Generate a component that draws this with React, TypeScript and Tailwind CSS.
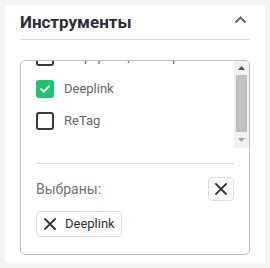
import { useState } from "react";

const items = [
  { id: "info", label: "Информация о версии", checked: false },
  { id: "deeplink", label: "Deeplink", checked: true },
  { id: "retag", label: "ReTag", checked: false },
];

function Check({ checked }: { checked: boolean }) {
  if (checked) {
    return (
      <span className="flex h-[18px] w-[18px] shrink-0 items-center justify-center rounded-[3px] bg-[#1cc46d]">
        <svg width="12" height="12" viewBox="0 0 12 12" fill="none">
          <path d="M2.2 6.2 4.8 8.7 9.8 3.4" stroke="#fff" strokeWidth="2" strokeLinecap="round" strokeLinejoin="round" />
        </svg>
      </span>
    );
  }
  return <span className="h-[18px] w-[18px] shrink-0 rounded-[3px] border-2 border-[#363645]" />;
}

function Cross({ size = 12 }: { size?: number }) {
  return (
    <svg width={size} height={size} viewBox="0 0 12 12" fill="none">
      <path d="M1 1 11 11M11 1 1 11" stroke="#2f2f2f" strokeWidth="1.8" strokeLinecap="square" />
    </svg>
  );
}

export default function App() {
  const [list] = useState(items);

  return (
    <div className="min-h-[268px] bg-[#f3f3f3] p-[5px] font-['Roboto',sans-serif]">
      <div className="h-[258px] bg-white px-[15px]">
        <div className="flex h-[35px] items-end justify-between border-b border-[#dcdcdc] pb-[7px]">
          <h2 className="text-[17px] leading-5 font-bold text-[#2e2e36]">Инструменты</h2>
          <svg width="13" height="8" viewBox="0 0 13 8" fill="none" className="mb-[8px] mr-[3px]">
            <path d="M1.5 6.5 6.5 1.5 11.5 6.5" stroke="#6a6a6a" strokeWidth="2" />
          </svg>
        </div>

        <div className="mt-[20px] h-[195px] overflow-hidden rounded-[5px] border border-[#bdbdbd]">
          <div className="flex h-[87px]">
            <div className="flex-1 overflow-hidden pl-[15px]">
              <div className="-mt-[20px]">
                {list.map((it) => (
                  <div key={it.id} className="flex h-8 items-center gap-[10px]">
                    <Check checked={it.checked} />
                    <span className="whitespace-nowrap text-[13px] text-[#666666]">{it.label}</span>
                  </div>
                ))}
              </div>
            </div>
            <div className="flex w-[15px] flex-col items-center bg-[#f1f1f1]">
              <div className="flex h-[14px] items-center justify-center">
                <svg width="7" height="4" viewBox="0 0 7 4">
                  <path d="M3.5 0 7 4H0z" fill="#505050" />
                </svg>
              </div>
              <div className="h-[57px] w-[11px] bg-[#c1c1c1]" />
              <div className="flex h-[16px] items-center justify-center">
                <svg width="7" height="4" viewBox="0 0 7 4">
                  <path d="M0 0h7L3.5 4z" fill="#a3a3a3" />
                </svg>
              </div>
            </div>
          </div>

          <div className="px-[15px]">
            <div className="mt-[15px] border-t border-[#dcdcdc]" />
            <div className="mt-[13px] flex items-center justify-between">
              <span className="text-[14px] text-[#737373]">Выбраны:</span>
              <button className="flex h-6 w-[26px] items-center justify-center rounded-[4px] border border-[#dedede] bg-white">
                <Cross />
              </button>
            </div>
            <div className="mt-[10px] flex">
              <span className="flex h-[26px] items-center gap-[9px] rounded-[4px] border border-[#dedede] pl-[7px] pr-[6px] text-[13px] text-[#2f2f2f]">
                <Cross />
                Deeplink
              </span>
            </div>
          </div>
        </div>
      </div>
    </div>
  );
}
